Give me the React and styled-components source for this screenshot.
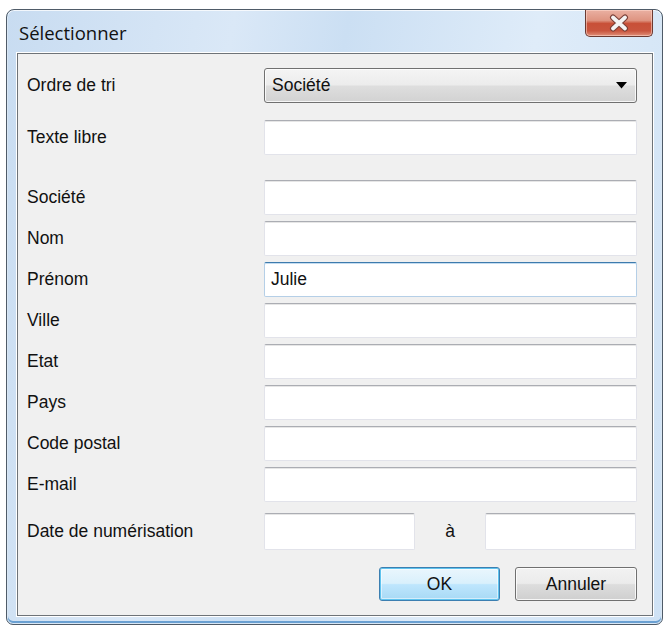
import styled, { createGlobalStyle } from "styled-components";

const GlobalStyle = createGlobalStyle`
  html, body {
    margin: 0;
    padding: 0;
    background: #ffffff;
  }
  body {
    font-family: "Liberation Sans", Arial, sans-serif;
  }
`;

const fields = [
  { label: "Société" },
  { label: "Nom" },
  { label: "Prénom", value: "Julie", focused: true },
  { label: "Ville" },
  { label: "Etat" },
  { label: "Pays" },
  { label: "Code postal" },
  { label: "E-mail" },
];

const App = () => {
  return (
    <>
      <GlobalStyle />
      <Window>
        <TitleBar>
          <Title>Sélectionner</Title>
          <CloseButton>
            <svg width="26" height="18" viewBox="0 0 26 18">
              <path
                d="M7 3.5 L19 14.5 M19 3.5 L7 14.5"
                stroke="#7a4038"
                strokeWidth="6"
                strokeLinecap="round"
              />
              <path
                d="M7 3.5 L19 14.5 M19 3.5 L7 14.5"
                stroke="#f4f4f4"
                strokeWidth="3.8"
                strokeLinecap="round"
              />
            </svg>
          </CloseButton>
        </TitleBar>
        <Client>
          <Row $mb={17}>
            <Label>Ordre de tri</Label>
            <Select>
              <span>Société</span>
              <svg width="11" height="7" viewBox="0 0 11 7">
                <path d="M0 0 L11 0 L5.5 6.5 Z" fill="#000" />
              </svg>
            </Select>
          </Row>
          <Row $mb={25}>
            <Label>Texte libre</Label>
            <Input />
          </Row>
          {fields.map((f) => (
            <Row key={f.label} $mb={6}>
              <Label>{f.label}</Label>
              <Input $focused={f.focused}>{f.value}</Input>
            </Row>
          ))}
          <Row $mb={17} $mt={5}>
            <Label>Date de numérisation</Label>
            <DateInput />
            <Between>à</Between>
            <DateInput />
          </Row>
          <Buttons>
            <Button $default>OK</Button>
            <Button>Annuler</Button>
          </Buttons>
        </Client>
      </Window>
    </>
  );
};

const Window = styled.div`
  box-sizing: border-box;
  width: 657px;
  height: 616px;
  margin: 9px 0 0 6px;
  border: 1px solid #4f5b68;
  border-radius: 8px 8px 7px 7px;
  background: linear-gradient(
    100deg,
    #c8dcf1 0%,
    #dae8f7 30%,
    #cbdff3 45%,
    #dfecf9 70%,
    #cfe2f5 100%
  );
  box-shadow: inset 0 0 0 1px rgba(255, 255, 255, 0.75),
    inset 0 -2px 0 1px #6aa0d2;
  display: flex;
  flex-direction: column;
  padding: 0 9px 8px 10px;
`;

const TitleBar = styled.div`
  height: 43px;
  display: flex;
  justify-content: space-between;
  align-items: flex-start;
`;

const Title = styled.div`
  font-family: "Open Sans", "Liberation Sans", sans-serif;
  font-size: 18.5px;
  color: #111;
  margin-top: 10px;
  padding-left: 2px;
`;

const CloseButton = styled.div`
  box-sizing: border-box;
  width: 68px;
  height: 27px;
  border: 1px solid #6b3a32;
  border-top: none;
  border-radius: 0 0 5px 5px;
  background: linear-gradient(
    180deg,
    #eab0a2 0%,
    #de9481 40%,
    #c85038 52%,
    #c9553e 80%,
    #e0907a 100%
  );
  box-shadow: inset 0 0 0 1px rgba(255, 220, 210, 0.55);
  display: flex;
  align-items: center;
  justify-content: center;
`;

const Client = styled.div`
  flex: 1;
  box-sizing: border-box;
  background: #f0f0f0;
  border: 1px solid #6e7378;
  box-shadow: 0 0 0 1px #ffffff;
  padding: 14px 15px 0 9px;
  display: flex;
  flex-direction: column;
`;

const Row = styled.div`
  display: flex;
  align-items: center;
  margin-top: ${(p) => p.$mt || 0}px;
  margin-bottom: ${(p) => p.$mb || 0}px;
`;

const Label = styled.div`
  width: 237px;
  flex-shrink: 0;
  font-size: 17.5px;
  color: #111;
`;

const Input = styled.div`
  box-sizing: border-box;
  flex: 1;
  height: 35px;
  background: #fff;
  border: 1px solid ${(p) => (p.$focused ? "#b5cfe7" : "#e2e3ea")};
  border-top-color: ${(p) => (p.$focused ? "#3d7bad" : "#abadb3")};
  box-shadow: ${(p) =>
    p.$focused ? "inset 0 1px 0 #c4dcf0" : "inset 0 1px 0 #e6e6e6"};
  border-radius: 2px;
  font-size: 17.5px;
  color: #111;
  padding-left: 6px;
  display: flex;
  align-items: center;
`;

const DateInput = styled(Input)`
  flex: 0 0 151px;
  height: 37px;
`;

const Between = styled.div`
  width: 70px;
  text-align: center;
  font-size: 17.5px;
  color: #111;
`;

const Select = styled.div`
  box-sizing: border-box;
  flex: 1;
  height: 35px;
  border: 1px solid #707070;
  border-radius: 3px;
  background: linear-gradient(
    180deg,
    #f4f4f4 0%,
    #ececec 48%,
    #dedede 52%,
    #d2d2d2 100%
  );
  box-shadow: inset 0 0 0 1px rgba(255, 255, 255, 0.8);
  display: flex;
  align-items: center;
  justify-content: space-between;
  padding: 0 9px 0 7px;
  font-size: 17.5px;
  color: #111;
`;

const Buttons = styled.div`
  display: flex;
  justify-content: flex-end;
  gap: 15px;
`;

const Button = styled.div`
  box-sizing: border-box;
  width: ${(p) => (p.$default ? 121 : 122)}px;
  height: 34px;
  border: 1px solid ${(p) => (p.$default ? "#3c7fb1" : "#707070")};
  border-radius: 3px;
  background: ${(p) =>
    p.$default
      ? "linear-gradient(180deg, #eaf6fd 0%, #d9f0fc 48%, #bee6fd 52%, #a7d9f5 100%)"
      : "linear-gradient(180deg, #f2f2f2 0%, #ebebeb 48%, #dddddd 52%, #cfcfcf 100%)"};
  box-shadow: ${(p) =>
    p.$default
      ? "inset 0 0 0 1px #5fc3ee, inset 0 0 0 2px rgba(255,255,255,0.5)"
      : "inset 0 0 0 1px rgba(255,255,255,0.8)"};
  display: flex;
  align-items: center;
  justify-content: center;
  font-size: 17.5px;
  color: #111;
`;

export default App;
